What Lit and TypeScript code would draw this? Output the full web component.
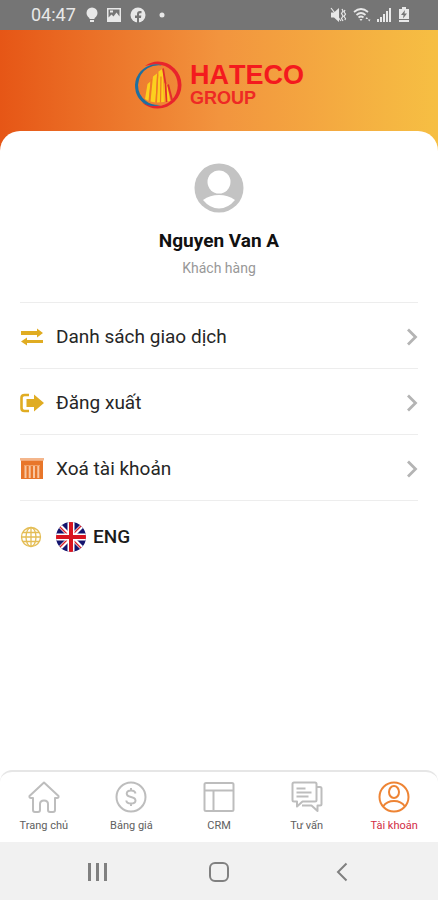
import { LitElement, html, css, svg } from "lit";
import { customElement, property, state } from "lit/decorators.js";
import { classMap } from "lit/directives/class-map.js";

const transferIcon = svg`<svg class="icon" viewBox="0 0 24 24" fill="#e0ac22">
  <path d="M1 6h16V3.500l6 4.500-6 4.500V10H1zM23 15H7v-2.500l-6 4 6 4V18h16z"/></svg>`;

const logoutIcon = svg`<svg class="icon" viewBox="0 0 24 24">
  <path d="M9 4H4.500Q1.500 4 1.500 7v10q0 3 3 3H9" fill="none" stroke="#e0ac22" stroke-width="2.600"/>
  <path d="M6.500 8H14V3.500L24 12l-10 8.500V16H6.500z" fill="#e0ac22"/></svg>`;

const binIcon = svg`<svg class="icon" viewBox="0 0 24 24">
  <path d="M0 1h24v2.500H0z" fill="#f4b68c"/>
  <path d="M1 3.500h22V22H1z" fill="#e8762a"/>
  <path d="M5.500 9v12M9.700 9v12M14 9v12M18.300 9v12" stroke="#f8c6a0" stroke-width="2"/>
  <path d="M4 8.500h16" stroke="#f2a268" stroke-width="1"/></svg>`;

const globeIcon = svg`<svg class="icon globe" viewBox="0 0 22 22" fill="none" stroke="#e4bd55" stroke-width="1.300">
  <circle cx="11" cy="11" r="9.500"/><ellipse cx="11" cy="11" rx="5" ry="9.500"/>
  <path d="M11 1.500v19M1.500 11h19M3 6.500h16M3 15.500h16"/></svg>`;

const chevron = svg`<svg class="chevron" viewBox="0 0 12 18" fill="none" stroke="#b4b4b4" stroke-width="2.800">
  <path d="M2 1.500 9.500 9 2 16.500"/></svg>`;

const flag = svg`<svg class="flag" viewBox="0 0 30 30">
  <defs><clipPath id="disc"><circle cx="15" cy="15" r="15"/></clipPath></defs>
  <g clip-path="url(#disc)">
    <path d="M0 0h30v30H0z" fill="#14146e"/>
    <path d="M2 2l26 26M28 2 2 28" stroke="#fff" stroke-width="4"/>
    <path d="M3 4l24 24M27 2 3 26" stroke="#d8202c" stroke-width="1.400"/>
    <path d="M15 0v30M0 15h30" stroke="#fff" stroke-width="7"/>
    <path d="M15 0v30M0 15h30" stroke="#d8141f" stroke-width="4"/>
  </g></svg>`;

const tabIcons = {
  home: svg`<svg viewBox="0 0 32 32"><path d="M16 1.500 1.500 15Q1 17 3 17h2v12q0 2 2 2h3q2 0 2-2v-6q0-3.500 4-3.500t4 3.500v6q0 2 2 2h3q2 0 2-2V17h2q2 0 1.500-2z"/></svg>`,
  price: svg`<svg viewBox="0 0 32 32"><circle cx="16" cy="16" r="14.500"/>
    <path d="M20.500 12.500Q20 9.500 16 9.500t-4.300 3q0 2.700 4.300 3.500t4.500 3.500q0 3-4.500 3t-4.700-3M16 7v2.500M16 22.500V25"/></svg>`,
  crm: svg`<svg viewBox="0 0 32 32"><rect x="1.500" y="2" width="29" height="28" rx="1.500"/><path d="M1.500 9.500h29M10.500 9.500V30"/></svg>`,
  chat: svg`<svg viewBox="0 0 32 32"><path d="M3 1.500h21q1.500 0 1.500 1.500v16q0 1.500-1.500 1.500H11.500L6 25.500v-5H3q-1.500 0-1.500-1.500V3q0-1.500 1.500-1.500z"/>
    <path d="M5.500 7.500h9M5.500 11.500h15M5.500 15.500h12M25.500 6H29q1.500 0 1.500 1.500V23q0 1.500-1.500 1.500h-2.500V30l-6-5.500H11"/></svg>`,
  account: svg`<svg viewBox="0 0 32 32"><circle cx="16" cy="16" r="14.500"/><ellipse cx="16" cy="11" rx="5" ry="6"/>
    <path d="M5 25.500Q9 20 16 20t11 5.500"/></svg>`,
};

@customElement("menu-row")
class MenuRow extends LitElement {
  @property() label = "";
  @property({ attribute: false }) icon: unknown;

  static styles = css`
    :host { display: block; }
    .row {
      display: flex; align-items: center; box-sizing: border-box;
      width: 100%; height: 65px; padding: 2px 0 0;
      border: 0; background: none; color: #262626;
      font: 400 19px/24px Roboto, sans-serif; text-align: left; cursor: pointer;
    }
    .icon { width: 24px; height: 24px; flex: none; }
    .label { flex: 1; margin-left: 12px; }
    .chevron { width: 12px; height: 18px; }
  `;

  render() {
    return html`<button class="row" type="button">
      ${this.icon}<span class="label">${this.label}</span>${chevron}
    </button>`;
  }
}

@customElement("app-root")
class AppRoot extends LitElement {
  @state() active = "account";

  static styles = css`
    :host {
      display: flex; flex-direction: column; min-height: 100vh;
      background: #fff; font-family: Roboto, sans-serif; color: #262626;
    }
    button { border: 0; padding: 0; background: none; font: inherit; cursor: pointer; }
    .status {
      display: flex; align-items: center; justify-content: space-between;
      height: 30px; padding: 0 28px 0 31px; background: #757575; color: #e8e8e8;
    }
    .group { display: flex; align-items: center; gap: 8px; }
    .group svg { display: block; height: 16px; fill: #e8e8e8; }
    .time { font-size: 18px; line-height: 24px; margin-right: 2px; }
    .right { gap: 6px; }
    .brand {
      display: flex; justify-content: center; align-items: center; gap: 8px;
      height: 110px; padding-bottom: 20px;
      background: linear-gradient(90deg, #e65616, #f2943e 50%, #f6bf43);
    }
    .mark { width: 48px; height: 48px; }
    .name { color: #f41a1e; font: 700 27px/26px "Liberation Sans", sans-serif; font-kerning: none; }
    .sub { color: #ee2a24; font: 700 18px/20px "Liberation Sans", sans-serif; }
    .sheet {
      flex: 1; margin-top: -29px; padding: 0 20px; background: #fff;
      border-radius: 20px 20px 0 0;
    }
    .profile {
      display: flex; flex-direction: column; align-items: center;
      padding: 32px 0 25px;
    }
    .avatar { width: 50px; height: 50px; }
    .user { margin: 16px 0 0; font-size: 19px; line-height: 24px; font-weight: 700; color: #111; }
    .role { margin: 6px 0 0; font-size: 14px; line-height: 18px; color: #989898; }
    .menu { list-style: none; margin: 0; padding: 0; }
    .menu li { border-top: 1px solid #ededed; }
    .language { display: flex; align-items: center; height: 72px; width: 100%; color: #1c1c1c; }
    .globe { width: 22px; height: 22px; }
    .flag { width: 30px; height: 30px; margin: 0 7px 0 14px; }
    .code { font-size: 19px; font-weight: 500; line-height: 24px; }
    .tabs {
      display: grid; grid-template-columns: repeat(5, 1fr); height: 70px;
      border-top: 2px solid #e6e6e6; border-radius: 12px 12px 0 0; background: #fff;
    }
    .tab {
      display: flex; flex-direction: column; align-items: center; gap: 5px;
      padding-top: 9px; text-decoration: none; color: #606060;
      font-size: 11px; line-height: 16px;
    }
    .tab svg { width: 32px; height: 32px; fill: none; stroke: #bdbdbd; stroke-width: 2; stroke-linejoin: round; }
    .tab.active { color: #d22c45; }
    .tab.active svg { stroke: #ee8434; }
    .system {
      display: grid; grid-template-columns: repeat(3, 1fr); height: 58px;
      padding: 0 36px; background: #f1f1f1;
    }
    .system button { display: grid; place-items: center; }
    .system svg { width: 24px; height: 24px; fill: none; stroke: #808080; stroke-width: 2; }
  `;

  private tabs = [
    { id: "home", label: "Trang chủ" },
    { id: "price", label: "Bảng giá" },
    { id: "crm", label: "CRM" },
    { id: "chat", label: "Tư vấn" },
    { id: "account", label: "Tài khoản" },
  ] as const;

  private entries = [
    { label: "Danh sách giao dịch", icon: transferIcon },
    { label: "Đăng xuất", icon: logoutIcon },
    { label: "Xoá tài khoản", icon: binIcon },
  ];

  private select(event: Event, id: string) {
    event.preventDefault();
    this.active = id;
  }

  render() {
    return html`
      <div class="status">
        <div class="group">
          <span class="time">04:47</span>
          <svg width="12" viewBox="0 0 12 16"><circle cx="6" cy="6" r="5.500"/><path d="M3.500 9h5v3h-5zM4 13h4v2H4z"/></svg>
          <svg width="16" viewBox="0 0 16 16"><path fill-rule="evenodd" d="M1 1h14v14H1zM2.500 2.500v8l3-3 2 2 3-4 3 4v-7z"/><path d="M4 3.500h3v2H4z"/></svg>
          <svg width="16" viewBox="0 0 16 16"><circle cx="8" cy="8" r="7.500"/><path d="M7 16v-5H5V8.500h2V7q0-3 3-3h1.500v2.200H10q-1 0-1 1v1.300h2.300L11 11H9v5z" fill="#757575"/></svg>
          <svg width="16" viewBox="0 0 16 16"><circle cx="8" cy="8" r="2.500"/></svg>
        </div>
        <div class="group right">
          <svg width="17" viewBox="0 0 17 16"><path d="M1 5.500h3L9 1v14l-5-4.500H1z"/><path d="M1 1l10 13M12 2l1 2-1.500 2.500L13 9l-1.500 2.500L13 14M15 3l-1 2 1.500 2L14 9.500l1.500 2L15 13" stroke="#e8e8e8" stroke-width="1.200" fill="none"/></svg>
          <svg width="18" viewBox="0 0 18 16"><path d="M1 5q7-6 14 0M3.500 8q4.500-4 9 0M5.500 10.500q2.500-2 5 0" stroke="#e8e8e8" stroke-width="1.700" fill="none"/><path d="M6.500 12h3L8 14zM12.500 12l1.300-2 1.300 2zM15 12.500l1.200 2 1.300-2z"/></svg>
          <svg width="15" viewBox="0 0 15 16"><path d="M0 12h2v3H0zM3 10h2v5H3zM6 7h2v8H6zM9 4h2v11H9zM12 1h2v14h-2z"/></svg>
          <svg width="12" viewBox="0 0 12 16"><path d="M4 0h4v2h3v10H1V2h3zM1 13h10v2H1z"/><path d="M7 3 3 8h2.500L5 11.500 9 6.500H6.500z" fill="#757575"/></svg>
        </div>
      </div>

      <header class="brand">
        <svg class="mark" viewBox="0 0 48 48" fill="none">
          <path fill-rule="evenodd" d="M24 .5a23.500 23.500 0 1 1 0 47 23.500 23.500 0 0 1-16-6q7 3.500 15 3.500a20.500 20.500 0 0 0 0-41.500Q17 3 11 5 17 .5 24 .5z" fill="#e8242c"/>
          <path d="M28 4.500Q24 2.500 19 3.500A22 22 0 0 0 1 24q0 14 12 20 6 2 14 0-10 .5-15-4Q4 34 4 24 5 12 14 7q6-3.500 14-2.500z" fill="#1f6f9f"/>
          <path d="M11 38l2.500-15 3-2.500L14.500 40zM16.500 40.500l2.500-25 4-3L21.500 41.500zM23 41.500l1.500-31 4.500-3 1 33.500zM30.500 41l-.5-19 3.500 1.500L36 40z" fill="#fcd01e"/>
          <path d="M15.500 40l2-22M22 41.500l1.700-28M26.500 41.500l.5-26" stroke="#ef7a22" stroke-width="1.200"/>
          <path d="M29 7.500l2.500 15 1 18.500" stroke="#e2302a" stroke-width="1.800"/>
          <path d="M34 23.500 38 39" stroke="#e2302a" stroke-width="2"/>
        </svg>
        <div>
          <div class="name">HATECO</div>
          <div class="sub">GROUP</div>
        </div>
      </header>

      <main class="sheet">
        <section class="profile">
          <svg class="avatar" viewBox="0 0 50 50">
            <circle cx="25" cy="25" r="24.500" fill="#c3c3c3"/>
            <circle cx="25" cy="19" r="11.500" fill="#fff"/>
            <path d="M9 37Q16 32 25 32t16 5Q34 45.500 25 45.500T9 37z" fill="#fff"/>
          </svg>
          <h1 class="user">Nguyen Van A</h1>
          <p class="role">Khách hàng</p>
        </section>
        <ul class="menu">
          ${this.entries.map((e) => html`<li><menu-row .label=${e.label} .icon=${e.icon}></menu-row></li>`)}
          <li>
            <button class="language" type="button">${globeIcon}${flag}<span class="code">ENG</span></button>
          </li>
        </ul>
      </main>

      <nav class="tabs">
        ${this.tabs.map(
          (t) => html`<a href="#${t.id}" class=${classMap({ tab: true, active: this.active === t.id })}
            @click=${(ev: Event) => this.select(ev, t.id)}>${tabIcons[t.id]}<span>${t.label}</span></a>`
        )}
      </nav>

      <div class="system">
        <button type="button" aria-label="Recent apps"><svg viewBox="0 0 24 24"><path d="M4.500 4v18M12.500 4v18M20.500 4v18" stroke-width="3"/></svg></button>
        <button type="button" aria-label="Home"><svg viewBox="0 0 24 24"><rect x="3" y="4" width="18" height="18" rx="5"/></svg></button>
        <button type="button" aria-label="Back"><svg viewBox="0 0 24 24"><path d="M17.500 4.500 9 13l8.500 8.500"/></svg></button>
      </div>
    `;
  }
}
